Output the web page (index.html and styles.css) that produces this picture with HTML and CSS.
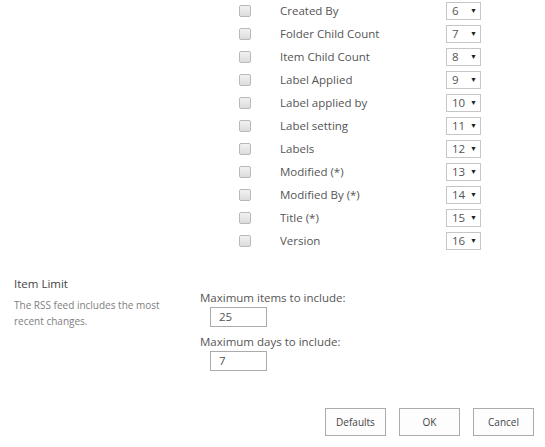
FILE: index.html
```html
<!DOCTYPE html>
<html lang="en">
<head>
    <meta charset="UTF-8">
    <title>RSS Settings</title>
    <link rel="stylesheet" href="styles.css">
</head>
<body>
    <div class="columns">
        <div class="row"><span class="chk"></span><span class="name">Created By</span><span class="pos">6 <i>&#9660;</i></span></div>
        <div class="row"><span class="chk"></span><span class="name">Folder Child Count</span><span class="pos">7 <i>&#9660;</i></span></div>
        <div class="row"><span class="chk"></span><span class="name">Item Child Count</span><span class="pos">8 <i>&#9660;</i></span></div>
        <div class="row"><span class="chk"></span><span class="name">Label Applied</span><span class="pos">9 <i>&#9660;</i></span></div>
        <div class="row"><span class="chk"></span><span class="name">Label applied by</span><span class="pos">10 <i>&#9660;</i></span></div>
        <div class="row"><span class="chk"></span><span class="name">Label setting</span><span class="pos">11 <i>&#9660;</i></span></div>
        <div class="row"><span class="chk"></span><span class="name">Labels</span><span class="pos">12 <i>&#9660;</i></span></div>
        <div class="row"><span class="chk"></span><span class="name">Modified (*)</span><span class="pos">13 <i>&#9660;</i></span></div>
        <div class="row"><span class="chk"></span><span class="name">Modified By (*)</span><span class="pos">14 <i>&#9660;</i></span></div>
        <div class="row"><span class="chk"></span><span class="name">Title (*)</span><span class="pos">15 <i>&#9660;</i></span></div>
        <div class="row"><span class="chk"></span><span class="name">Version</span><span class="pos">16 <i>&#9660;</i></span></div>
    </div>

    <div class="section">
        <div class="side">
            <div class="heading">Item Limit</div>
            <div class="desc">The RSS feed includes the most recent changes.</div>
        </div>
        <div class="fields">
            <div class="label">Maximum items to include:</div>
            <div class="box">25</div>
            <div class="label">Maximum days to include:</div>
            <div class="box">7</div>
        </div>
    </div>

    <div class="buttons">
        <button class="btn">Defaults</button>
        <button class="btn">OK</button>
        <button class="btn">Cancel</button>
    </div>
</body>
</html>
```
FILE: styles.css
```css
body {
    margin: 0;
    background-color: white;
    font-family: "Open Sans", "Noto Sans", sans-serif;
    color: #555;
    font-size: 11.5px;
}
.columns {
    margin-top: -1px;
    margin-left: 239px;
    width: 242px;
}
.row {
    display: flex;
    align-items: center;
    height: 23px;
}
.chk {
    width: 10px;
    height: 10px;
    border: 1px solid #b9b9b9;
    border-radius: 2px;
    background: linear-gradient(#f2f2f2, #dcdcdc);
    margin-right: 29px;
}
.name {
    flex: 1;
}
.pos {
    width: 25px;
    height: 16px;
    border: 1px solid #c6c6c6;
    padding-left: 5px;
    padding-right: 3px;
    display: flex;
    align-items: center;
    justify-content: space-between;
    line-height: 16px;
}
.pos i {
    font-style: normal;
    font-size: 7px;
    color: #222;
}
.section {
    display: flex;
    margin-top: 24px;
}
.side {
    width: 186px;
    padding-left: 14px;
}
.heading {
    color: #444;
    line-height: 16px;
    margin-bottom: 5px;
}
.desc {
    font-size: 10px;
    color: #808080;
    line-height: 16px;
    width: 160px;
}
.fields {
    padding-top: 14px;
}
.label {
    line-height: 16px;
    margin-bottom: 1px;
}
.box {
    width: 47px;
    height: 18px;
    border: 1px solid #ababab;
    margin-left: 10px;
    padding-left: 8px;
    line-height: 18px;
    margin-bottom: 7px;
}
.buttons {
    display: flex;
    justify-content: flex-end;
    gap: 13px;
    margin-top: 30px;
    margin-right: 11px;
}
.btn {
    width: 61px;
    height: 28px;
    border: 1px solid #ababab;
    background-color: #fdfdfd;
    font-family: "Open Sans", "Noto Sans", sans-serif;
    font-size: 10px;
    color: #444;
    padding: 0;
}
```
